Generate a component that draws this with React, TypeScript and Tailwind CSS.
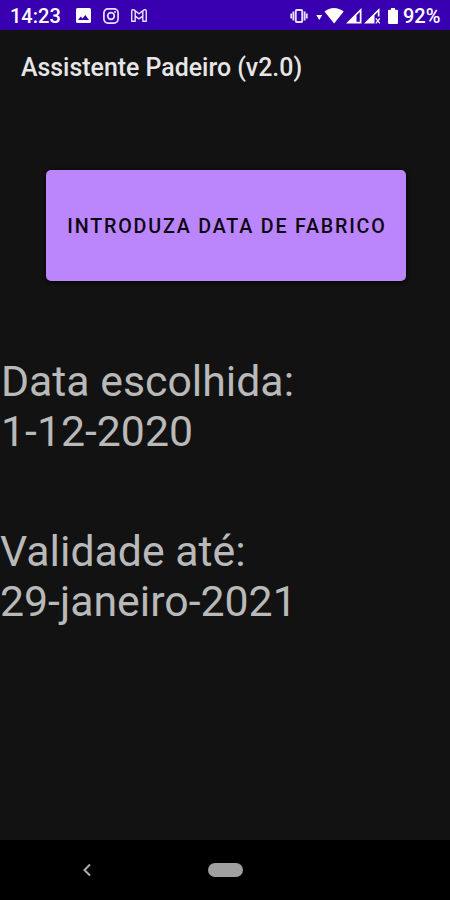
import React from 'react';

interface Reading {
  label: string;
  value: string;
}

const produced: Reading = { label: 'Data escolhida:', value: '1-12-2020' };
const expires: Reading = { label: 'Validade até:', value: '29-janeiro-2021' };

const ImageIcon = () => (
  <svg width="15" height="15" viewBox="0 0 15 15">
    <path fill="#fff" fillRule="evenodd" d="M1.6 0h11.8A1.6 1.6 0 0 1 15 1.6v11.8a1.6 1.6 0 0 1-1.6 1.6H1.6A1.6 1.6 0 0 1 0 13.4V1.6A1.6 1.6 0 0 1 1.6 0ZM2 12h11L9.3 7 6.5 10.5 4.8 8.5Z" />
  </svg>
);

const InstagramIcon = () => (
  <svg width="16" height="16" viewBox="0 0 16 16" fill="none" stroke="#e9e0ff" strokeWidth="1.7">
    <rect x="0.9" y="0.9" width="14.2" height="14.2" rx="4" />
    <circle cx="8" cy="8" r="3.3" />
    <circle cx="12" cy="4" r="1" fill="#e9e0ff" stroke="none" />
  </svg>
);

const GmailIcon = () => (
  <svg width="16" height="13" viewBox="0 0 16 13" fill="none" stroke="#e9e0ff" strokeWidth="1.4" strokeLinejoin="round">
    <path d="M0.7 12.3V2.2C0.7 0.7 2.2 0.2 3.3 1.1L8 4.7l4.7-3.6c1.1-.9 2.6-.4 2.6 1.1v10.1h-3.5V7.1L8 9.9 4.2 7.1v5.2Z" />
    <path d="M4.2 7.1V2M11.8 7.1V2" />
  </svg>
);

const VibrateIcon = () => (
  <svg width="18" height="14" viewBox="0 0 18 14" fill="none" stroke="#e9e0ff">
    <rect x="5.8" y="1" width="6.4" height="12" rx="0.8" strokeWidth="1.8" />
    <path d="M3.4 2.6v8.8M14.6 2.6v8.8" strokeWidth="1.9" />
    <path d="M1.2 4.6v4.8M16.8 4.6v4.8" strokeWidth="1.7" />
  </svg>
);

const WifiIcon = () => (
  <svg width="28" height="16" viewBox="0 0 28 16" fill="#fff">
    <path d="M0.3 7h5.9L3.25 12Z" />
    <path d="M8.5 3.6C14-1.1 22-1.1 27.7 3.6L18.1 15.5Z" />
  </svg>
);

const SignalIcon = () => (
  <svg width="16" height="16" viewBox="0 0 16 16">
    <path fill="#fff" fillRule="evenodd" d="M15.5 0v15.5H0ZM13.8 4v9.8h-3.3V7.3Z" />
  </svg>
);

const SignalOffIcon = () => (
  <svg width="17" height="16" viewBox="0 0 17 16">
    <path fill="#fff" d="M15.5 0v8.5h-1.7V4l-3.3 3.3v8.2H0Z" />
    <path d="m11.8 10.3 4 5M15.8 10.3l-4 5" stroke="#fff" strokeWidth="1.2" />
  </svg>
);

const BatteryIcon = () => (
  <svg width="10" height="16" viewBox="0 0 10 16">
    <path fill="#fff" d="M3 0h4v1.7h2a1 1 0 0 1 1 1V15a1 1 0 0 1-1 1H1a1 1 0 0 1-1-1V2.7a1 1 0 0 1 1-1h2Z" />
  </svg>
);

const StatusBar = () => (
  <header className="flex h-[30px] shrink-0 items-center bg-[#3900b1] pt-px pl-[10px] text-[20px] leading-none font-medium text-white">
    <span className="w-[66px] pt-px">14:23</span>
    <div className="flex items-center gap-3">
      <ImageIcon />
      <InstagramIcon />
      <GmailIcon />
    </div>
    <div className="ml-auto flex w-[160px] items-center">
      <VibrateIcon />
      <div className="ml-2 flex items-center gap-0.5">
        <WifiIcon />
        <SignalIcon />
        <SignalOffIcon />
      </div>
      <div className="ml-[7px]">
        <BatteryIcon />
      </div>
      <span className="ml-[5px] pt-px">92%</span>
    </div>
  </header>
);

const ReadingText = ({ label, value }: Reading) => (
  <section className="text-[42.8px] leading-[50px] whitespace-nowrap text-[#b9b9b9]">
    <p>{label}</p>
    <p>{value}</p>
  </section>
);

const NavigationBar = () => (
  <nav className="flex h-[60px] shrink-0 items-center bg-black pl-[82px]">
    <button aria-label="Voltar">
      <svg width="10" height="14" viewBox="0 0 10 14" fill="none" stroke="#aaa" strokeWidth="2.1">
        <path d="M8 1.5 2.5 7 8 12.5" />
      </svg>
    </button>
    <button aria-label="Início" className="ml-[116px] h-[14px] w-[35px] rounded-full bg-[#a0a0a0]" />
  </nav>
);

const App: React.FC = () => {
  return (
    <div className="flex h-[900px] w-[450px] flex-col overflow-hidden bg-[#121212] font-['Roboto',sans-serif]">
      <StatusBar />
      <h1 className="flex h-[76px] shrink-0 items-center pl-[21px] text-[24.9px] font-medium text-[#e6e6e6]">
        Assistente Padeiro (v2.0)
      </h1>
      <main className="flex flex-1 flex-col pt-[64px]">
        <button className="ml-[46px] h-[111px] w-[360px] rounded-[5px] bg-[#bb86fc] pt-[2px] pl-[2px] text-[19.7px] font-medium tracking-[1.8px] whitespace-nowrap text-[#0c0612] shadow-[0_1px_4px_#000]">
          INTRODUZA DATA DE FABRICO
        </button>
        <div className="mt-[75px] flex flex-col gap-[70px]">
          <div className="pl-px">
            <ReadingText {...produced} />
          </div>
          <ReadingText {...expires} />
        </div>
      </main>
      <NavigationBar />
    </div>
  );
};

export default App;
